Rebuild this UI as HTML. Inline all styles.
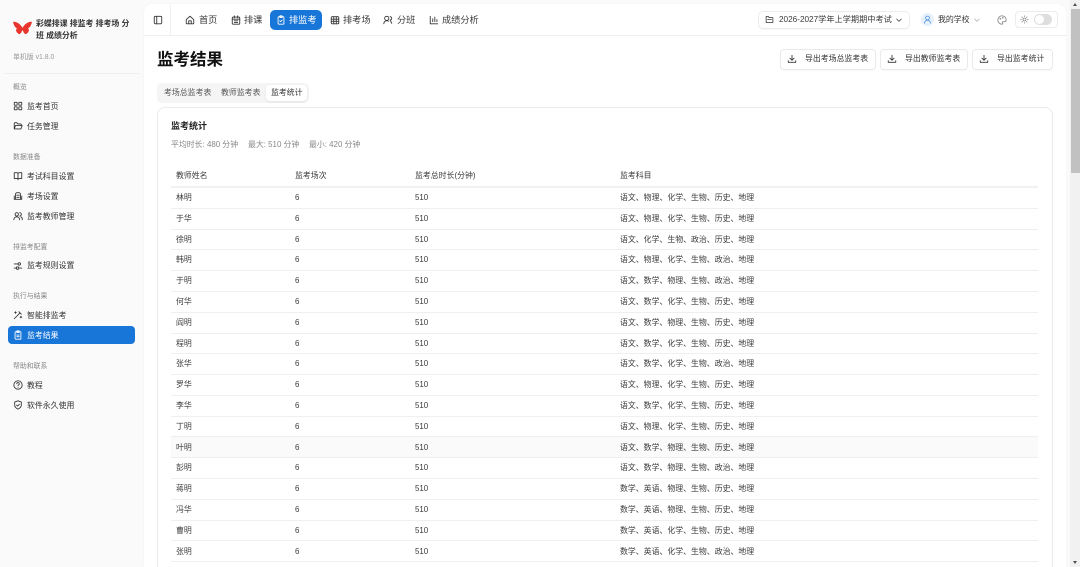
<!DOCTYPE html>
<html lang="zh"><head><meta charset="utf-8"><style>
*{box-sizing:border-box}
html,body{margin:0;padding:0;width:1080px;height:567px;overflow:hidden;background:#fafafa}
#w{position:relative;width:1080px;height:567px;overflow:hidden;background:#fafafa;font-family:"Liberation Sans","Noto Sans CJK SC",sans-serif;color:#333}
.a{position:absolute;white-space:nowrap}
svg.i{position:absolute;fill:none;stroke:#333;stroke-width:2.1;stroke-linecap:round;stroke-linejoin:round}
.s{font-size:7.9px;line-height:12px;color:#333}
.g{font-size:6.9px;line-height:10px;color:#888}
.n{font-size:9.2px;line-height:14px;color:#3a3a3a}
.b{position:absolute;top:49px;height:21px;background:#fff;border:1px solid #eaeaea;border-radius:4px;box-shadow:0 1px 1px rgba(0,0,0,.03)}
.c{font-size:7.9px;line-height:12px;color:#3a3a3a}
.l{position:absolute;left:171px;width:867px;height:1px;background:#efefef}
</style></head><body><div id="w">
<!-- main panel -->
<div class="a" style="left:144px;top:4px;width:922px;height:563px;background:#fff;border-radius:8px 8px 0 0;box-shadow:0 0 1px rgba(0,0,0,.08)"></div>
<div class="a" style="left:144px;top:35px;width:922px;height:1px;background:#eeeeee"></div>
<div class="a" style="left:170px;top:4px;width:1px;height:31px;background:#f0f0f0"></div>
<!-- scrollbar -->
<div class="a" style="left:1070px;top:0;width:10px;height:567px;background:#f1f1f1"></div>
<div class="a" style="left:1071px;top:9px;width:9px;height:164px;background:#c1c1c1"></div>
<div class="a" style="left:1073px;top:3px;width:0;height:0;border-left:2.5px solid transparent;border-right:2.5px solid transparent;border-bottom:3px solid #505050"></div>
<div class="a" style="left:1073px;top:561px;width:0;height:0;border-left:2.5px solid transparent;border-right:2.5px solid transparent;border-top:3px solid #505050"></div>
<!-- logo -->
<svg class="a" style="left:13px;top:21px" width="19" height="15" viewBox="0 0 19 15"><path d="M0 1C3 0 7 3 9 6L9.5 7 10 6C12 3 16 0 19 1 18 4 17.500 6 15 7.500 17 8.500 15.500 12 13 13 11.500 13.500 10.500 11 9.500 9 8.500 11 7.500 13.500 6 13 3.500 12 2 8.500 4 7.500 1.500 6 1 4 0 1Z" fill="#e8362f"/></svg>
<div class="a" style="left:36px;top:18px;width:98px;white-space:normal;font-size:7.9px;line-height:11.500px;font-weight:700;color:#333">彩蝶排课 排监考 排考场 分班 成绩分析</div>
<div class="a g" style="left:13px;top:53px;color:#999">单机版 v1.8.0</div>
<div class="a" style="left:4px;top:73px;width:135px;height:1px;background:#efefef"></div>
<!-- sidebar -->
<div class="a g" style="left:13px;top:83px">概览</div>
<svg class="i" style="left:13px;top:101px" width="10" height="10" viewBox="0 0 24 24"><rect x="3" y="3" width="7" height="7" rx="1"/><rect x="14" y="3" width="7" height="7" rx="1"/><rect x="3" y="14" width="7" height="7" rx="1"/><rect x="14" y="14" width="7" height="7" rx="1"/></svg>
<div class="a s" style="left:27px;top:101px">监考首页</div>
<svg class="i" style="left:13px;top:121px" width="10" height="10" viewBox="0 0 24 24"><path d="M3 19V6a2 2 0 0 1 2-2h4l2 3h7a2 2 0 0 1 2 2v1M3 19l3-8h16l-3 8H3Z"/></svg>
<div class="a s" style="left:27px;top:121px">任务管理</div>
<div class="a g" style="left:13px;top:153px">数据准备</div>
<svg class="i" style="left:13px;top:171px" width="10" height="10" viewBox="0 0 24 24"><path d="M12 7v14M3 18V4h6a3 3 0 0 1 3 3 3 3 0 0 1 3-3h6v14h-7a2 2 0 0 0-2 2 2 2 0 0 0-2-2H3Z"/></svg>
<div class="a s" style="left:27px;top:171px">考试科目设置</div>
<svg class="i" style="left:13px;top:191px" width="10" height="10" viewBox="0 0 24 24"><path d="M6 20V8a4 4 0 0 1 4-4h4a4 4 0 0 1 4 4v12M3 12v8h18v-8M9 10h6M9 15h6"/></svg>
<div class="a s" style="left:27px;top:191px">考场设置</div>
<svg class="i" style="left:13px;top:211px" width="10" height="10" viewBox="0 0 24 24"><circle cx="9" cy="8" r="4"/><path d="M2 21a7 7 0 0 1 14 0M16 4a4 4 0 0 1 0 8M19 14a6 6 0 0 1 3 7"/></svg>
<div class="a s" style="left:27px;top:211px">监考教师管理</div>
<div class="a g" style="left:13px;top:243px">排监考配置</div>
<svg class="i" style="left:13px;top:261px" width="10" height="10" viewBox="0 0 24 24"><path d="M3 7h9M16 17h5M3 17h5"/><circle cx="15" cy="7" r="3"/><circle cx="11" cy="17" r="3"/></svg>
<div class="a s" style="left:27px;top:260px">监考规则设置</div>
<div class="a g" style="left:13px;top:292px">执行与结果</div>
<svg class="i" style="left:13px;top:310px" width="10" height="10" viewBox="0 0 24 24"><path d="M3 21 16 8M14 4l6 6M6 4v4M4 6h4M19 15v4M17 17h4"/></svg>
<div class="a s" style="left:27px;top:310px">智能排监考</div>
<div class="a" style="left:8px;top:326px;width:127px;height:18px;background:#1976d9;border-radius:4px"></div>
<svg class="i" style="left:13px;top:330px;stroke:#fff" width="10" height="10" viewBox="0 0 24 24"><rect x="5" y="4" width="14" height="18" rx="2"/><rect x="9" y="2" width="6" height="4" rx="1"/><path d="M9 12h6M9 16h6"/></svg>
<div class="a s" style="left:27px;top:330px;color:#fff">监考结果</div>
<div class="a g" style="left:13px;top:362px">帮助和联系</div>
<svg class="i" style="left:13px;top:380px" width="10" height="10" viewBox="0 0 24 24"><circle cx="12" cy="12" r="10"/><path d="M9 9a3 3 0 1 1 4 3c-1 .5-1 1-1 2M12 17.500v.01"/></svg>
<div class="a s" style="left:27px;top:380px">教程</div>
<svg class="i" style="left:13px;top:400px" width="10" height="10" viewBox="0 0 24 24"><path d="M12 2 4 5v7c0 5 4 8 8 10 4-2 8-5 8-10V5l-8-3ZM8.500 12l2.500 2.500 4.500-4.500"/></svg>
<div class="a s" style="left:27px;top:400px">软件永久使用</div>
<!-- top nav -->
<svg class="i" style="left:153px;top:15px" width="10" height="10" viewBox="0 0 24 24"><rect x="3" y="3" width="18" height="18" rx="3"/><path d="M9 3v18"/></svg>
<svg class="i" style="left:185px;top:15px" width="10" height="10" viewBox="0 0 24 24"><path d="M3 11 12 3l9 8v9a1 1 0 0 1-1 1H4a1 1 0 0 1-1-1v-9ZM9 21v-7h6v7"/></svg>
<div class="a n" style="left:199px;top:13px">首页</div>
<svg class="i" style="left:231px;top:15px" width="10" height="10" viewBox="0 0 24 24"><rect x="3" y="5" width="18" height="17" rx="2"/><path d="M8 2v5M16 2v5M3 10h18M8 14h8M8 18h8"/></svg>
<div class="a n" style="left:244px;top:13px">排课</div>
<div class="a" style="left:270px;top:10px;width:52px;height:20px;background:#1976d9;border-radius:5px"></div>
<svg class="i" style="left:276px;top:15px;stroke:#fff" width="10" height="10" viewBox="0 0 24 24"><rect x="5" y="4" width="14" height="18" rx="2"/><rect x="9" y="2" width="6" height="4" rx="1"/><path d="m9 14 2 2 4-4"/></svg>
<div class="a n" style="left:289px;top:13px;color:#fff">排监考</div>
<svg class="i" style="left:330px;top:15px" width="10" height="10" viewBox="0 0 24 24"><rect x="3" y="4" width="18" height="17" rx="2"/><path d="M3 10h18M3 15h18M9 4v17M15 4v17"/></svg>
<div class="a n" style="left:343px;top:13px">排考场</div>
<svg class="i" style="left:383px;top:15px" width="10" height="10" viewBox="0 0 24 24"><circle cx="9" cy="8" r="5"/><path d="M2 21a7 7 0 0 1 11-6M17 4a4 4 0 0 1 0 8l4 8"/></svg>
<div class="a n" style="left:397px;top:13px">分班</div>
<svg class="i" style="left:429px;top:15px" width="10" height="10" viewBox="0 0 24 24"><path d="M3 3v18h18M9 16V9M14 16V5M19 16v-5"/></svg>
<div class="a n" style="left:442px;top:13px">成绩分析</div>
<!-- right header -->
<div class="a" style="left:758px;top:11px;width:152px;height:18px;background:#fff;border:1px solid #ececec;border-radius:5px;box-shadow:0 1px 1px rgba(0,0,0,.03)"></div>
<svg class="i" style="left:765px;top:15px" width="9" height="9" viewBox="0 0 24 24"><path d="M3 20V4h6l2 3h10v13H3ZM7 12h10"/></svg>
<div class="a" style="left:779px;top:13px;font-size:8.200px;line-height:13px;color:#3a3a3a">2026-2027学年上学期期中考试</div>
<svg class="i" style="left:895px;top:16px" width="8" height="8" viewBox="0 0 24 24"><path d="m5 9 7 7 7-7"/></svg>
<div class="a" style="left:921px;top:13px;width:13px;height:13px;border-radius:50%;background:#e6f0fb"></div>
<svg class="i" style="left:923px;top:15px;stroke:#4a8ee0" width="9" height="9" viewBox="0 0 24 24"><circle cx="12" cy="8" r="5"/><path d="M4 22a8 8 0 0 1 16 0"/></svg>
<div class="a s" style="left:938px;top:14px">我的学校</div>
<svg class="i" style="left:973px;top:16px;stroke:#aaa" width="8" height="8" viewBox="0 0 24 24"><path d="m5 9 7 7 7-7"/></svg>
<svg class="i" style="left:997px;top:15px;stroke:#888" width="10" height="10" viewBox="0 0 24 24"><path d="M12 2a10 10 0 1 0 0 20c2 0 2-2 1-3s0-3 2-3h3c2 0 4-1 4-4 0-6-5-10-10-10Z"/><circle cx="8" cy="9" r="1"/><circle cx="14" cy="7" r="1"/></svg>
<div class="a" style="left:1015px;top:11px;width:43px;height:17px;background:#fff;border:1px solid #ececec;border-radius:4px"></div>
<svg class="i" style="left:1020px;top:15px;stroke:#888" width="9" height="9" viewBox="0 0 24 24"><circle cx="12" cy="12" r="4"/><path d="M12 2v2M12 20v2M2 12h2M20 12h2M5 5l1.500 1.500M17.500 17.500 19 19M5 19l1.500-1.500M17.500 6.500 19 5"/></svg>
<div class="a" style="left:1034px;top:14px;width:18px;height:11px;background:#dedede;border-radius:6px"></div>
<div class="a" style="left:1035px;top:15px;width:9px;height:9px;background:#fff;border-radius:50%"></div>
<!-- title -->
<div class="a" style="left:157px;top:48px;font-size:16.500px;line-height:24px;font-weight:700;color:#111">监考结果</div>
<div class="b" style="left:780px;width:96px"></div>
<svg class="i" style="left:787px;top:54px" width="10" height="10" viewBox="0 0 24 24"><path d="M3 16v4h18v-4M12 3v12M7 10l5 5 5-5"/></svg>
<div class="a s" style="left:805px;top:53px">导出考场总监考表</div>
<div class="b" style="left:880px;width:88px"></div>
<svg class="i" style="left:887px;top:54px" width="10" height="10" viewBox="0 0 24 24"><path d="M3 16v4h18v-4M12 3v12M7 10l5 5 5-5"/></svg>
<div class="a s" style="left:905px;top:53px">导出教师监考表</div>
<div class="b" style="left:972px;width:81px"></div>
<svg class="i" style="left:979px;top:54px" width="10" height="10" viewBox="0 0 24 24"><path d="M3 16v4h18v-4M12 3v12M7 10l5 5 5-5"/></svg>
<div class="a s" style="left:997px;top:53px">导出监考统计</div>
<!-- tabs -->
<div class="a" style="left:157px;top:83px;width:152px;height:20px;background:#f5f5f5;border-radius:5px"></div>
<div class="a" style="left:266px;top:85px;width:41px;height:16px;background:#fff;border-radius:4px;box-shadow:0 1px 2px rgba(0,0,0,.08)"></div>
<div class="a s" style="left:164px;top:87px;color:#555">考场总监考表</div>
<div class="a s" style="left:221px;top:87px;color:#555">教师监考表</div>
<div class="a s" style="left:271px;top:87px">监考统计</div>
<!-- card -->
<div class="a" style="left:157px;top:107px;width:896px;height:480px;background:#fff;border:1px solid #ebebeb;border-radius:8px"></div>
<div class="a" style="left:171px;top:119px;font-size:9px;line-height:14px;font-weight:700;color:#222">监考统计</div>
<div class="a" style="left:171px;top:139px;font-size:7.900px;line-height:12px;color:#888">平均时长: 480 分钟</div>
<div class="a" style="left:248px;top:139px;font-size:7.900px;line-height:12px;color:#888">最大: 510 分钟</div>
<div class="a" style="left:309px;top:139px;font-size:7.900px;line-height:12px;color:#888">最小: 420 分钟</div>
<div class="a c" style="left:176px;top:170px">教师姓名</div>
<div class="a c" style="left:295px;top:170px">监考场次</div>
<div class="a c" style="left:415px;top:170px">监考总时长(分钟)</div>
<div class="a c" style="left:620px;top:170px">监考科目</div>
<div class="a" style="left:171px;top:186px;width:867px;height:2px;background:#f2f2f2"></div>
<div class="a" style="left:171px;top:437px;width:867px;height:20px;background:#fafafa"></div>
<div class="l" style="top:208px"></div><div class="a c" style="left:176px;top:192px">林明</div><div class="a c" style="left:295px;top:192px">6</div><div class="a c" style="left:415px;top:192px">510</div><div class="a c" style="left:620px;top:192px">语文、物理、化学、生物、历史、地理</div>
<div class="l" style="top:229px"></div><div class="a c" style="left:176px;top:213px">于华</div><div class="a c" style="left:295px;top:213px">6</div><div class="a c" style="left:415px;top:213px">510</div><div class="a c" style="left:620px;top:213px">语文、物理、化学、生物、历史、地理</div>
<div class="l" style="top:249px"></div><div class="a c" style="left:176px;top:234px">徐明</div><div class="a c" style="left:295px;top:234px">6</div><div class="a c" style="left:415px;top:234px">510</div><div class="a c" style="left:620px;top:234px">语文、化学、生物、政治、历史、地理</div>
<div class="l" style="top:270px"></div><div class="a c" style="left:176px;top:254px">韩明</div><div class="a c" style="left:295px;top:254px">6</div><div class="a c" style="left:415px;top:254px">510</div><div class="a c" style="left:620px;top:254px">语文、物理、化学、生物、政治、地理</div>
<div class="l" style="top:291px"></div><div class="a c" style="left:176px;top:275px">于明</div><div class="a c" style="left:295px;top:275px">6</div><div class="a c" style="left:415px;top:275px">510</div><div class="a c" style="left:620px;top:275px">语文、数学、物理、生物、政治、地理</div>
<div class="l" style="top:312px"></div><div class="a c" style="left:176px;top:296px">何华</div><div class="a c" style="left:295px;top:296px">6</div><div class="a c" style="left:415px;top:296px">510</div><div class="a c" style="left:620px;top:296px">语文、数学、化学、生物、历史、地理</div>
<div class="l" style="top:333px"></div><div class="a c" style="left:176px;top:317px">阎明</div><div class="a c" style="left:295px;top:317px">6</div><div class="a c" style="left:415px;top:317px">510</div><div class="a c" style="left:620px;top:317px">语文、数学、物理、生物、历史、地理</div>
<div class="l" style="top:353px"></div><div class="a c" style="left:176px;top:338px">程明</div><div class="a c" style="left:295px;top:338px">6</div><div class="a c" style="left:415px;top:338px">510</div><div class="a c" style="left:620px;top:338px">语文、数学、化学、生物、历史、地理</div>
<div class="l" style="top:374px"></div><div class="a c" style="left:176px;top:358px">张华</div><div class="a c" style="left:295px;top:358px">6</div><div class="a c" style="left:415px;top:358px">510</div><div class="a c" style="left:620px;top:358px">语文、数学、化学、生物、政治、地理</div>
<div class="l" style="top:395px"></div><div class="a c" style="left:176px;top:379px">罗华</div><div class="a c" style="left:295px;top:379px">6</div><div class="a c" style="left:415px;top:379px">510</div><div class="a c" style="left:620px;top:379px">语文、物理、化学、生物、历史、地理</div>
<div class="l" style="top:416px"></div><div class="a c" style="left:176px;top:400px">李华</div><div class="a c" style="left:295px;top:400px">6</div><div class="a c" style="left:415px;top:400px">510</div><div class="a c" style="left:620px;top:400px">语文、数学、化学、生物、历史、地理</div>
<div class="l" style="top:436px"></div><div class="a c" style="left:176px;top:421px">丁明</div><div class="a c" style="left:295px;top:421px">6</div><div class="a c" style="left:415px;top:421px">510</div><div class="a c" style="left:620px;top:421px">语文、物理、化学、生物、历史、地理</div>
<div class="l" style="top:457px"></div><div class="a c" style="left:176px;top:442px">叶明</div><div class="a c" style="left:295px;top:442px">6</div><div class="a c" style="left:415px;top:442px">510</div><div class="a c" style="left:620px;top:442px">语文、数学、物理、生物、历史、地理</div>
<div class="l" style="top:478px"></div><div class="a c" style="left:176px;top:462px">彭明</div><div class="a c" style="left:295px;top:462px">6</div><div class="a c" style="left:415px;top:462px">510</div><div class="a c" style="left:620px;top:462px">语文、数学、物理、生物、政治、地理</div>
<div class="l" style="top:499px"></div><div class="a c" style="left:176px;top:483px">蒋明</div><div class="a c" style="left:295px;top:483px">6</div><div class="a c" style="left:415px;top:483px">510</div><div class="a c" style="left:620px;top:483px">数学、英语、物理、生物、历史、地理</div>
<div class="l" style="top:520px"></div><div class="a c" style="left:176px;top:504px">冯华</div><div class="a c" style="left:295px;top:504px">6</div><div class="a c" style="left:415px;top:504px">510</div><div class="a c" style="left:620px;top:504px">数学、英语、物理、生物、历史、地理</div>
<div class="l" style="top:540px"></div><div class="a c" style="left:176px;top:525px">曹明</div><div class="a c" style="left:295px;top:525px">6</div><div class="a c" style="left:415px;top:525px">510</div><div class="a c" style="left:620px;top:525px">数学、英语、化学、生物、历史、地理</div>
<div class="l" style="top:561px"></div><div class="a c" style="left:176px;top:546px">张明</div><div class="a c" style="left:295px;top:546px">6</div><div class="a c" style="left:415px;top:546px">510</div><div class="a c" style="left:620px;top:546px">数学、英语、化学、生物、政治、地理</div>
</div></body></html>
